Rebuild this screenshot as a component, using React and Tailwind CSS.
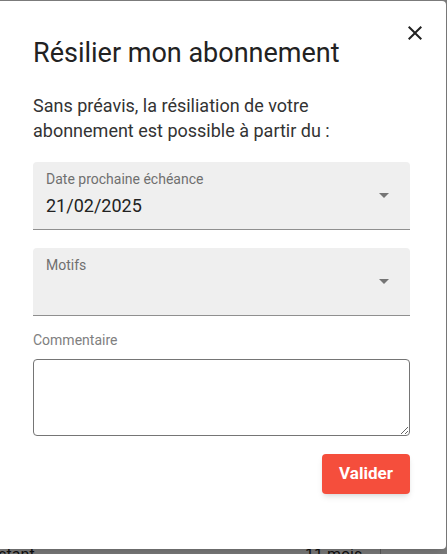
import React, { useState } from 'react';

function Arrow() {
  return (
    <svg width="24" height="24" viewBox="0 0 24 24" className="text-[#757575]">
      <path d="M7 10l5 5 5-5z" fill="currentColor" />
    </svg>
  );
}

function FilledSelect({ label, value }) {
  return (
    <div className="relative h-[68px] rounded-t bg-[#efefef] border-b border-[#8f8f8f] px-[13px] pt-[9px]">
      <div className="text-[14px] leading-4 text-[#6f6f6f]">{label}</div>
      <div className="mt-[7px] h-6 text-[18px] leading-6 text-[#222]">{value}</div>
      <div className="absolute right-[14px] top-[21px]">
        <Arrow />
      </div>
    </div>
  );
}

export default function App() {
  const [comment, setComment] = useState('');

  return (
    <div
      className="w-[447px] h-[554px] overflow-hidden bg-[#7b7b7b] flex flex-col"
      style={{ fontFamily: 'Roboto, "Liberation Sans", sans-serif' }}
    >
      <div className="mt-px h-[548px] w-[446px] shrink-0 rounded-r bg-white shadow-lg pl-[33px] pr-[36px] pt-[36px] relative">
        <button className="absolute right-[19px] top-[20px] text-[#222]">
          <svg width="24" height="24" viewBox="0 0 24 24">
            <path
              d="M19 6.41L17.59 5 12 10.59 6.41 5 5 6.41 10.59 12 5 17.59 6.41 19 12 13.41 17.59 19 19 17.59 13.41 12z"
              fill="currentColor"
            />
          </svg>
        </button>

        <h2 className="text-[27px] leading-8 text-[#222]">Résilier mon abonnement</h2>

        <p className="mt-[24px] text-[18px] leading-[25px] text-[#333]">
          Sans préavis, la résiliation de votre
          <br />
          abonnement est possible à partir du :
        </p>

        <div className="mt-[19px] flex flex-col gap-[18px]">
          <FilledSelect label="Date prochaine échéance" value="21/02/2025" />
          <FilledSelect label="Motifs" value="" />
        </div>

        <div className="mt-[16px] text-[14px] leading-4 text-[#808080]">Commentaire</div>
        <textarea
          value={comment}
          onChange={(e) => setComment(e.target.value)}
          className="mt-[11px] block w-full h-[77px] rounded-sm border border-[#757575] outline-none p-2 text-[16px]"
        ></textarea>

        <div className="mt-[18px] flex justify-end">
          <button className="h-10 w-[88px] rounded bg-[#f54e3c] text-white font-bold text-[17px] shadow-md">
            Valider
          </button>
        </div>
      </div>

      <div className="flex h-[5px] overflow-hidden text-[16px] leading-[12px] text-[#111]">
        <div className="w-[325px] -ml-[20px]">Restant</div>
        <div className="w-[75px]">11 mois</div>
        <div className="border-l border-[#5a5a5a]"></div>
      </div>
    </div>
  );
}
